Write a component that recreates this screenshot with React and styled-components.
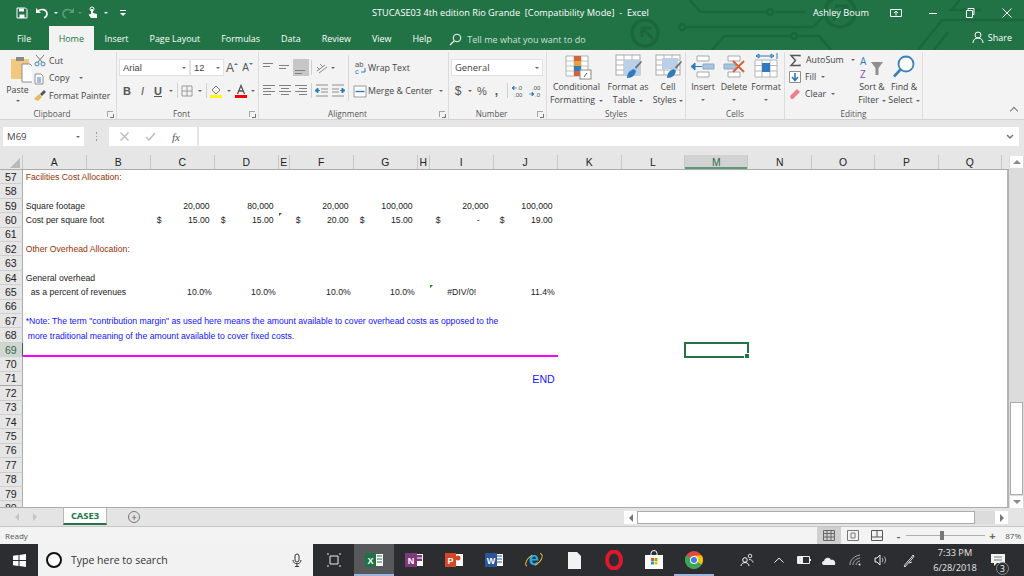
import React from 'react';
import styled, { createGlobalStyle, css } from 'styled-components';

const UI = '"Open Sans", "Noto Sans", sans-serif';
const CELL = '"Liberation Sans", Arial, sans-serif';
const GREEN = '#217346';

const GlobalStyle = createGlobalStyle`
	html, body { margin: 0; padding: 0; background: #e6e6e6; }
	* { box-sizing: border-box; }
`;

const Page = styled.div`
	width: 1024px;
	height: 576px;
	overflow: hidden;
	display: flex;
	flex-direction: column;
	font-family: ${UI};
	color: #444;
`;

// Title bar and tabs
const Header = styled.header`
	position: relative;
	height: 50px;
	flex: none;
	background: ${GREEN};
	color: #fff;
`;

const Circuit = styled.svg`
	position: absolute;
	right: 0;
	top: 0;
`;

const TitleBar = styled.div`
	position: relative;
	height: 25px;
	display: flex;
	align-items: center;
`;

const Qat = styled.div`
	display: flex;
	align-items: center;
	width: 372px;
	padding-left: 14px;
	flex: none;
`;

const QatBtn = styled.span`
	display: flex;
	align-items: center;
	justify-content: center;
	width: ${p => p.$w}px;
	height: 20px;
	flex: none;
`;

const Title = styled.div`
	flex: none;
	width: 441px;
	font-size: 9.2px;
	white-space: pre;
`;

const UserName = styled.div`
	flex: none;
	width: 64px;
	font-size: 9.2px;
	white-space: nowrap;
`;

const WinBtn = styled.span`
	display: flex;
	align-items: center;
	justify-content: center;
	width: 37px;
	height: 25px;
	flex: none;
`;

const TabRow = styled.nav`
	position: relative;
	height: 25px;
	display: flex;
	padding-left: 6.5px;
	align-items: stretch;
`;

const Tab = styled.div`
	display: flex;
	align-items: center;
	padding: 0 ${p => (p.$active ? 10 : 10.5)}px;
	font-size: 8.95px;
	margin-top: 1px;
	${p => p.$active && css`
		background: #f3f3f3;
		color: ${GREEN};
		margin-left: 7px;
	`}
`;

const TellMe = styled.div`
	display: flex;
	align-items: center;
	gap: 5px;
	margin-left: 7px;
	font-size: 9px;
	color: #cfe0d5;
	padding-top: 3px;
`;

const Share = styled.div`
	position: absolute;
	right: 12px;
	top: 0;
	height: 25px;
	display: flex;
	align-items: center;
	gap: 4px;
	font-size: 9px;
`;

// Ribbon
const Ribbon = styled.section`
	position: relative;
	height: 70px;
	flex: none;
	display: flex;
	background: #f3f3f3;
	padding-top: 2px;
	border-bottom: 1px solid #d4d4d4;
	font-size: 8.8px;
`;

const Group = styled.div`
	position: relative;
	width: ${p => p.$w}px;
	height: 67px;
	flex: none;
	display: flex;
	flex-direction: column;
	border-right: 1px solid #dcdcdc;
`;

const GroupBody = styled.div`
	flex: 1;
	display: flex;
	padding-left: ${p => p.$pad || 0}px;
	min-height: 0;
`;

const GroupLabel = styled.div`
	height: 11px;
	line-height: 11px;
	text-align: center;
	font-size: 8.2px;
	color: #555;
	flex: none;
	padding-right: ${p => (p.$launcher ? 12 : 0)}px;
`;

const Launcher = styled.span`
	position: absolute;
	right: 3px;
	bottom: 2px;
	width: 6px;
	height: 6px;
	border-left: 1px solid #a5a5a5;
	border-top: 1px solid #a5a5a5;
	&::after {
		content: '';
		position: absolute;
		left: 2px;
		top: 2px;
		width: 3px;
		height: 3px;
		border-right: 1px solid #777;
		border-bottom: 1px solid #777;
	}
`;

const Caret = styled.i`
	display: inline-block;
	flex: none;
	width: 0;
	height: 0;
	margin-left: ${p => p.$gap || 0}px;
	vertical-align: middle;
	border-left: 2.5px solid transparent;
	border-right: 2.5px solid transparent;
	border-top: 2.5px solid #666;
`;

const PasteBtn = styled.div`
	width: 33px;
	flex: none;
	display: flex;
	flex-direction: column;
	align-items: center;
	padding-top: 2px;
	line-height: 12px;
`;

const SmallStack = styled.div`
	display: flex;
	flex-direction: column;
	padding-top: ${p => p.$top ?? 0}px;
`;

const SmallBtn = styled.div`
	display: flex;
	align-items: center;
	gap: ${p => p.$gap ?? 3}px;
	height: 17.5px;
	white-space: nowrap;
`;

const Rows = styled.div`
	display: flex;
	flex-direction: column;
	gap: 6px;
	padding-top: 7px;
	width: ${p => (p.$w ? p.$w + 'px' : 'auto')};
	flex: none;
`;

const Row = styled.div`
	display: flex;
	align-items: center;
	height: 17px;
`;

const Combo = styled.div`
	width: ${p => p.$w}px;
	height: 17px;
	flex: none;
	display: flex;
	align-items: center;
	justify-content: space-between;
	padding: 0 3px;
	background: #fff;
	border: 1px solid #e2e2e2;
	font-size: 9.4px;
	color: #444;
	font-family: ${p => (p.$cell ? CELL : UI)};
`;

const IconBtn = styled.span`
	display: flex;
	align-items: center;
	justify-content: center;
	width: ${p => p.$w || 16}px;
	height: 17px;
	flex: none;
	background: ${p => (p.$on ? '#c6c6c6' : 'transparent')};
`;

const RowSep = styled.span`
	width: 1px;
	height: 15px;
	margin: 0 ${p => p.$m ?? 2}px;
	flex: none;
	background: #d0d0d0;
`;

const VSep = styled.span`
	width: 1px;
	height: 46px;
	margin: 3px 4px 0 1px;
	flex: none;
	background: #d8d8d8;
`;

const BigBtn = styled.div`
	width: ${p => p.$w}px;
	flex: none;
	display: flex;
	flex-direction: column;
	align-items: center;
	text-align: center;
	white-space: nowrap;
	line-height: 13px;
	padding-top: 1px;
`;

const BigIcon = styled.div`
	height: 28px;
	display: flex;
	align-items: center;
	justify-content: center;
	flex: none;
`;

const FontLetter = styled.span`
	font-family: ${CELL};
	font-size: ${p => p.$size || 11}px;
	font-weight: ${p => (p.$bold ? 700 : 400)};
	font-style: ${p => (p.$italic ? 'italic' : 'normal')};
	text-decoration: ${p => (p.$under ? 'underline' : 'none')};
	color: #555;
`;

const Collapse = styled.span`
	position: absolute;
	right: 7px;
	bottom: 5px;
	width: 6px;
	height: 6px;
	border-left: 1.5px solid #777;
	border-top: 1.5px solid #777;
	transform: rotate(45deg);
`;

// Formula bar
const FormulaArea = styled.div`
	height: 35px;
	flex: none;
	padding: 7px 5px 0 3px;
	display: flex;
	background: #e6e6e6;
`;

const NameBox = styled.div`
	width: 81px;
	height: 19px;
	flex: none;
	padding: 0 4px 0 4px;
	display: flex;
	align-items: center;
	justify-content: space-between;
	background: #fff;
	font-size: 9.6px;
`;

const Grip = styled.div`
	width: 25px;
	flex: none;
	display: flex;
	flex-direction: column;
	align-items: center;
	justify-content: center;
	gap: 2px;
	height: 19px;
	& > i {
		width: 1.5px;
		height: 1.5px;
		background: #9a9a9a;
	}
`;

const FxBox = styled.div`
	width: 88px;
	height: 19px;
	flex: none;
	display: flex;
	align-items: center;
	background: #fff;
	padding-left: 10px;
	gap: 15px;
	color: #b9b9b9;
`;

const FxText = styled.span`
	font-family: "Liberation Serif", serif;
	font-style: italic;
	font-size: 11px;
	color: #555;
	margin-left: 1px;
`;

const FormulaInput = styled.div`
	flex: 1;
	height: 19px;
	margin-left: 2px;
	background: #fff;
	display: flex;
	align-items: center;
	justify-content: flex-end;
	padding-right: 4px;
`;

// Sheet
const COLS = '22.7px repeat(4, 64px) 11px 64px 64px 12px repeat(3, 64px) repeat(7, 63.4px) 1fr';
const COL_NAMES = ['A', 'B', 'C', 'D', 'E', 'F', 'G', 'H', 'I', 'J', 'K', 'L', 'M', 'N', 'O', 'P', 'Q'];
const ROW_H = 14.41;

const SheetArea = styled.div`
	height: 353px;
	flex: none;
	display: flex;
	background: #e6e6e6;
`;

const GridPane = styled.div`
	width: 1009px;
	flex: none;
	display: flex;
	flex-direction: column;
	overflow: hidden;
`;

const HeadRow = styled.div`
	height: 15px;
	flex: none;
	display: grid;
	grid-template-columns: ${COLS};
	border-bottom: 1px solid #ababab;
	font-family: ${CELL};
	font-size: 10.4px;
	color: #222;
`;

const Corner = styled.div`
	position: relative;
	border-right: 1px solid #c8c8c8;
	&::after {
		content: '';
		position: absolute;
		right: 2px;
		bottom: 1px;
		border-left: 10px solid transparent;
		border-bottom: 10px solid #b9b9b9;
	}
`;

const ColHead = styled.div`
	display: flex;
	align-items: center;
	justify-content: center;
	border-right: 1px solid #c8c8c8;
	${p => p.$on && css`
		background: #d2d2d2;
		color: #2f6b47;
		box-shadow: inset 0 -2px 0 #5f9a78;
	`}
`;

const SheetBody = styled.div`
	flex: 1;
	min-height: 0;
	overflow: hidden;
	background: #fff;
	border-right: 2px solid #b4b4b4;
	border-bottom: 1px solid #ababab;
	font-family: ${CELL};
`;

const SheetRow = styled.div`
	height: ${ROW_H}px;
	display: grid;
	grid-template-columns: ${COLS};
	grid-template-rows: ${ROW_H}px;
	color: #222;
`;

const RowHead = styled.div`
	grid-column: 1;
	grid-row: 1;
	display: flex;
	align-items: center;
	justify-content: center;
	font-size: 10.6px;
	background: ${p => (p.$on ? '#d0d6d1' : '#e6e6e6')};
	color: ${p => (p.$on ? '#2f6b47' : '#222')};
	border-bottom: 1px solid ${p => (p.$dark ? '#a9a9a9' : '#cfcfcf')};
	border-right: 1px solid ${p => (p.$on ? GREEN : '#ababab')};
`;

const TONES = { black: '#222', brown: '#993300', blue: '#1414ff' };

const Cell = styled.div`
	position: relative;
	grid-row: 1;
	grid-column: ${p => COL_NAMES.indexOf(p.$col) + 2};
	display: flex;
	align-items: center;
	white-space: nowrap;
	min-width: 0;
	color: ${p => TONES[p.$tone || 'black']};
	font-size: ${p => p.$size || 8.68}px;
	padding: 0 ${p => p.$right ?? 0}px 0 ${p => p.$left ?? 0}px;
	justify-content: ${p => p.$align || 'flex-start'};
	${p => p.$flag && css`
		&::before {
			content: '';
			position: absolute;
			left: 0;
			top: 0;
			border-top: 3px solid #107c10;
			border-right: 3px solid transparent;
		}
	`}
`;

const PinkRule = styled.div`
	grid-row: 1;
	grid-column: 2 / span 10;
	align-self: end;
	height: 2px;
	background: #ff00ff;
`;

const ActiveCell = styled.div`
	position: relative;
	grid-row: 1;
	grid-column: 14;
	outline: 2px solid ${GREEN};
	outline-offset: -1px;
	&::after {
		content: '';
		position: absolute;
		right: -2px;
		bottom: -2px;
		width: 4px;
		height: 4px;
		background: ${GREEN};
		border: 0.5px solid #fff;
	}
`;

const VScroll = styled.div`
	flex: 1;
	display: flex;
	flex-direction: column;
	padding: 1px 1px 0 1px;
	background: linear-gradient(#e6e6e6 0, #e6e6e6 1px, #dcdcdc 1px);
`;

const ScrollBtn = styled.div`
	height: 12px;
	flex: none;
	display: flex;
	align-items: center;
	justify-content: center;
	background: #fff;
`;

const Tri = styled.i`
	width: 0;
	height: 0;
	${p => p.$dir === 'up' && css`
		border-left: 4px solid transparent;
		border-right: 4px solid transparent;
		border-bottom: 4px solid #8a8a8a;
	`}
	${p => p.$dir === 'down' && css`
		border-left: 4px solid transparent;
		border-right: 4px solid transparent;
		border-top: 4px solid #8a8a8a;
	`}
	${p => p.$dir === 'left' && css`
		border-top: 4px solid transparent;
		border-bottom: 4px solid transparent;
		border-right: 4px solid ${p.$light ? '#c4c4c4' : '#777'};
	`}
	${p => p.$dir === 'right' && css`
		border-top: 4px solid transparent;
		border-bottom: 4px solid transparent;
		border-left: 4px solid ${p.$light ? '#c4c4c4' : '#777'};
	`}
`;

const VThumb = styled.div`
	height: 93px;
	flex: none;
	margin-top: 234px;
	background: #fff;
	border: 1px solid #ababab;
`;

// Sheet tabs and status bar
const TabsBar = styled.div`
	height: 19px;
	flex: none;
	display: flex;
	align-items: flex-start;
	background: #e4e4e4;
	border-bottom: 1px solid #c6c6c6;
`;

const TabNav = styled.div`
	width: 63px;
	height: 18px;
	flex: none;
	display: flex;
	align-items: center;
	gap: 14px;
	padding-left: 15px;
`;

const SheetTab = styled.div`
	width: 44px;
	height: 17px;
	flex: none;
	display: flex;
	align-items: center;
	justify-content: center;
	background: #fff;
	border-bottom: 2px solid ${GREEN};
	border-left: 1px solid #b8b8b8;
	border-right: 1px solid #b8b8b8;
	color: ${GREEN};
	font-size: 9.4px;
	font-weight: 700;
`;

const AddSheet = styled.div`
	width: 12px;
	height: 12px;
	margin: 3px 0 0 21px;
	flex: none;
	border-radius: 50%;
	border: 1px solid #777;
	display: flex;
	align-items: center;
	justify-content: center;
	font-size: 10px;
	line-height: 1;
	color: #555;
`;

const HScroll = styled.div`
	margin-left: auto;
	margin-right: 16px;
	width: 384px;
	height: 13px;
	margin-top: 3px;
	display: flex;
	flex: none;
	background: #dcdcdc;
`;

const HBtn = styled.div`
	width: 13px;
	flex: none;
	display: flex;
	align-items: center;
	justify-content: center;
	background: #fff;
`;

const HThumb = styled.div`
	width: 338px;
	flex: none;
	background: #fff;
	border: 1px solid #ababab;
`;

const StatusBar = styled.footer`
	height: 17px;
	flex: none;
	display: flex;
	align-items: center;
	background: #f3f3f3;
	padding-left: 5px;
	font-size: 8px;
	color: #555;
`;

const ViewBtn = styled.span`
	width: 24px;
	height: 17px;
	flex: none;
	display: flex;
	align-items: center;
	justify-content: center;
	background: ${p => (p.$on ? '#d0d0d0' : 'transparent')};
`;

const ZoomSlider = styled.div`
	position: relative;
	width: 79px;
	height: 1px;
	margin: 0 3px;
	flex: none;
	background: #b0b0b0;
	&::after {
		content: '';
		position: absolute;
		left: 34px;
		top: -4px;
		width: 4px;
		height: 9px;
		background: #777;
	}
`;

const ZoomSign = styled.span`
	font-size: 11px;
	font-weight: 700;
	color: #666;
	width: 9px;
	text-align: center;
	line-height: 1;
`;

const ZoomPct = styled.span`
	width: 27px;
	text-align: right;
	padding-right: 3px;
`;

// Taskbar
const Taskbar = styled.div`
	height: 32px;
	flex: none;
	display: flex;
	align-items: stretch;
	background: #2c2d30;
	color: #fff;
`;

const StartBtn = styled.div`
	width: 38px;
	flex: none;
	display: flex;
	align-items: center;
	justify-content: center;
`;

const SearchBox = styled.div`
	width: 275px;
	flex: none;
	display: flex;
	align-items: center;
	background: #f2f2f2;
	color: #333;
	font-size: 10.5px;
	padding-left: 7px;
	gap: 8px;
`;

const SearchText = styled.span`
	flex: 1;
`;

const MicSlot = styled.span`
	width: 32px;
	display: flex;
	justify-content: center;
`;

const TaskBtn = styled.div`
	width: ${p => p.$w || 40}px;
	flex: none;
	display: flex;
	align-items: center;
	justify-content: center;
	background: ${p => (p.$active ? '#57585a' : 'transparent')};
	box-shadow: ${p => (p.$running ? 'inset 0 -2px 0 #9db4de' : 'none')};
`;

const Tray = styled.div`
	margin-left: auto;
	display: flex;
	padding-right: 14px;
`;

const TrayItem = styled.div`
	width: ${p => p.$w}px;
	flex: none;
	display: flex;
	align-items: center;
	justify-content: center;
`;

const Clock = styled.div`
	width: 62px;
	flex: none;
	display: flex;
	flex-direction: column;
	align-items: center;
	justify-content: center;
	gap: 3px;
	font-size: 9.2px;
	line-height: 12px;
	color: #e8e8e8;
`;

const Notify = styled.div`
	position: relative;
	width: 24px;
	flex: none;
	display: flex;
	align-items: center;
	justify-content: center;
`;

const NotifyCount = styled.span`
	position: absolute;
	right: 1px;
	bottom: 1px;
	width: 13px;
	height: 13px;
	border-radius: 50%;
	border: 1px solid #8a8a8a;
	background: #2c2d30;
	font-size: 8.5px;
	line-height: 11px;
	text-align: center;
`;

// Drawn icons
const Ic = ({ w = 16, h = 16, children }) => (
	<svg width={w} height={h} viewBox={`0 0 ${w} ${h}`} fill="none">{children}</svg>
);

const CircuitArt = () => (
	<Circuit width="420" height="50" viewBox="604 0 420 50" fill="none" stroke="#1b673c" strokeWidth="2.4">
		<circle cx="645" cy="33" r="13" strokeWidth="3.5" />
		<path d="M642 37v-9h9M642 28l11 11" strokeWidth="3" />
		<circle cx="682" cy="27" r="3" />
		<path d="M685 27h128l13-13" />
		<circle cx="770" cy="12" r="3" />
		<path d="M767 12H700L690 0M775 12h30" />
		<path d="M712 50l12-14h66" />
		<circle cx="794" cy="36" r="3" />
		<path d="M797 36h22l12 14" />
		<circle cx="840" cy="12" r="15" strokeWidth="3.5" />
		<path d="M835 6h12v12M847 6l-14 14" strokeWidth="3" />
		<path d="M918 50l24-30h82M934 50l14-18M960 0l-9 10h30" />
	</Circuit>
);

const AlignLines = ({ widths, top = 3, step = 3, anchor = 'left' }) => (
	<Ic>
		{widths.map((w, i) => {
			const x = anchor === 'center' ? 8 - w / 2 : anchor === 'right' ? 14 - w : 2;
			return <rect key={i} x={x} y={top + i * step} width={w} height="1" fill="#808080" />;
		})}
	</Ic>
);

const BigTable = ({ fill, children }) => (
	<Ic w={30} h={28}>
		<rect x="3" y="2" width="24" height="20" fill="#fff" stroke="#a9a9a9" />
		<path d="M3 7h24M3 12h24M3 17h24M11 2v20M19 2v20" stroke="#b5b5b5" />
		{fill}
		{children}
	</Ic>
);

const Brush = () => (
	<g>
		<path d="M22 14l6-6 1 1-6 7z" fill="#6e6e6e" />
		<path d="M14 25c0-5 3-8 7-9l2 2c-1 4-3 7-9 7z" fill="#2f7bbf" />
	</g>
);

const CellStack = ({ children }) => (
	<Ic w={30} h={28}>
		<path d="M9 3h12v5H9zM9 19h12v5H9z" fill="#fff" stroke="#a9a9a9" />
		{children}
	</Ic>
);

const Sum = () => (
	<Ic w={13} h={13}><path d="M11 2.5V1.5H2l4.5 5-4.5 5h9v-1" stroke="#555" strokeWidth="1.4" /></Ic>
);

const App = () => {
	const rows = [];
	for (let n = 57; n <= 80; n++) rows.push(n);

	const content = {
		57: [{ col: 'A', left: 3, tone: 'brown', text: 'Facilities Cost Allocation:' }],
		59: [
			{ col: 'A', left: 3, text: 'Square footage' },
			{ col: 'C', right: 5, align: 'flex-end', text: '20,000' },
			{ col: 'D', right: 5, align: 'flex-end', text: '80,000' },
			{ col: 'F', right: 5, align: 'flex-end', text: '20,000' },
			{ col: 'G', right: 5, align: 'flex-end', text: '100,000' },
			{ col: 'I', right: 5, align: 'flex-end', text: '20,000' },
			{ col: 'J', right: 5, align: 'flex-end', text: '100,000' }
		],
		60: [
			{ col: 'A', left: 3, text: 'Cost per square foot' },
			{ col: 'C', money: '15.00' },
			{ col: 'D', money: '15.00' },
			{ col: 'E', flag: true },
			{ col: 'F', money: '20.00' },
			{ col: 'G', money: '15.00' },
			{ col: 'I', money: '-', dash: true },
			{ col: 'J', money: '19.00' }
		],
		62: [{ col: 'A', left: 3, tone: 'brown', text: 'Other Overhead Allocation:' }],
		64: [{ col: 'A', left: 3, text: 'General overhead' }],
		65: [
			{ col: 'A', left: 8, text: 'as a percent of revenues' },
			{ col: 'C', right: 3, align: 'flex-end', text: '10.0%' },
			{ col: 'D', right: 3, align: 'flex-end', text: '10.0%' },
			{ col: 'F', right: 3, align: 'flex-end', text: '10.0%' },
			{ col: 'G', right: 3, align: 'flex-end', text: '10.0%' },
			{ col: 'I', align: 'center', flag: true, text: '#DIV/0!' },
			{ col: 'J', right: 3, align: 'flex-end', text: '11.4%' }
		],
		67: [{ col: 'A', left: 3, tone: 'blue', text: '*Note: The term "contribution margin" as used here means the amount available to cover overhead costs as opposed to the' }],
		68: [{ col: 'A', left: 5, tone: 'blue', text: 'more traditional meaning of the amount available to cover fixed costs.' }],
		71: [{ col: 'J', right: 3, align: 'flex-end', tone: 'blue', size: 10.6, text: 'END' }]
	};

	const renderCell = (c, i) => {
		if (c.money) {
			return (
				<Cell key={i} $col={c.col} $left={6} $right={c.dash ? 14 : 5} $align="space-between">
					<span>$</span><span>{c.money}</span>
				</Cell>
			);
		}
		return (
			<Cell key={i} $col={c.col} $left={c.left} $right={c.right} $align={c.align} $tone={c.tone} $size={c.size} $flag={c.flag}>
				{c.text}
			</Cell>
		);
	};

	return (
		<Page>
			<GlobalStyle />
			<Header>
				<CircuitArt />
				<TitleBar>
					<Qat>
						<QatBtn $w={16}>
							<Ic w={12} h={12}>
								<path d="M1 1h8.5L11 2.5V11H1z" stroke="#fff" />
								<path d="M3 1.5h5v3H3zM3.5 7.5h5V11h-5z" fill="#fff" />
							</Ic>
						</QatBtn>
						<QatBtn $w={23}>
							<Ic w={14} h={12}>
								<path d="M2 5c3-4 10-3 10 2 0 2-1 3-3 4" stroke="#fff" strokeWidth="1.6" />
								<path d="M1 1v5h5z" fill="#fff" />
							</Ic>
						</QatBtn>
						<QatBtn $w={6}><Caret style={{ borderTopColor: '#fff' }} /></QatBtn>
						<QatBtn $w={18}>
							<Ic w={14} h={12}>
								<path d="M12 5C9 1 2 2 2 7c0 2 1 3 3 4" stroke="#5c9a78" strokeWidth="1.6" />
								<path d="M13 1v5H8z" fill="#5c9a78" />
							</Ic>
						</QatBtn>
						<QatBtn $w={6}><Caret style={{ borderTopColor: '#5c9a78' }} /></QatBtn>
						<QatBtn $w={20}>
							<Ic w={12} h={13}>
								<circle cx="5" cy="3" r="2" stroke="#fff" />
								<path d="M4 3h2v4l4 1v4H4L1.5 8.5 4 8z" fill="#fff" />
							</Ic>
						</QatBtn>
						<QatBtn $w={6}><Caret style={{ borderTopColor: '#fff' }} /></QatBtn>
						<QatBtn $w={28}>
							<Ic w={8} h={8}>
								<path d="M1 1.5h6" stroke="#fff" />
								<path d="M1 4h6L4 7z" fill="#fff" />
							</Ic>
						</QatBtn>
					</Qat>
					<Title>{'STUCASE03 4th edition Rio Grande  [Compatibility Mode]  -  Excel'}</Title>
					<UserName>Ashley Boum</UserName>
					<WinBtn>
						<Ic w={12} h={10}>
							<path d="M.5 1.5h11v7H.5z" stroke="#fff" />
							<path d="M6 7.5V3.5M4 5l2-2 2 2" stroke="#fff" />
						</Ic>
					</WinBtn>
					<WinBtn><Ic w={10} h={10}><path d="M1 5.5h8" stroke="#fff" /></Ic></WinBtn>
					<WinBtn>
						<Ic w={10} h={10}><path d="M1.5 2.5h6v7h-6zM3 2.5V.5h6v6H7.5" stroke="#fff" /></Ic>
					</WinBtn>
					<WinBtn><Ic w={12} h={12}><path d="M1.5 1.5l9 9M10.5 1.5l-9 9" stroke="#fff" /></Ic></WinBtn>
				</TitleBar>
				<TabRow>
					<Tab>File</Tab>
					<Tab $active>Home</Tab>
					<Tab>Insert</Tab>
					<Tab>Page Layout</Tab>
					<Tab>Formulas</Tab>
					<Tab>Data</Tab>
					<Tab>Review</Tab>
					<Tab>View</Tab>
					<Tab>Help</Tab>
					<TellMe>
						<Ic w={13} h={13}>
							<circle cx="8" cy="5" r="3.8" stroke="#fff" />
							<path d="M5 8l-4 4" stroke="#fff" strokeWidth="1.2" />
						</Ic>
						Tell me what you want to do
					</TellMe>
					<Share>
						<Ic w={12} h={13}>
							<circle cx="6" cy="4" r="3" stroke="#fff" />
							<path d="M1 12c0-3 2-5 5-5s5 2 5 5" stroke="#fff" />
						</Ic>
						Share
					</Share>
				</TabRow>
			</Header>

			<Ribbon>
				<Group $w={117}>
					<GroupBody $pad={1}>
						<PasteBtn>
							<Ic w={28} h={30}>
								<path d="M7 5h18v20H7z" fill="#f0c97f" />
								<path d="M12 3h8v4h-8z" fill="#8a8a8a" />
								<path d="M18 11h8l4 4v14H18z" transform="translate(0 -1)" fill="#fff" stroke="#8d8d8d" />
							</Ic>
							Paste
							<Caret style={{ marginTop: 4 }} />
						</PasteBtn>
						<SmallStack>
							<SmallBtn>
								<Ic w={12} h={13}>
									<circle cx="3" cy="10" r="2" stroke="#3d7fbd" />
									<circle cx="9" cy="10" r="2" stroke="#3d7fbd" />
									<path d="M4 8l6-7M8 8L2 1" stroke="#777" />
								</Ic>
								Cut
							</SmallBtn>
							<SmallBtn>
								<Ic w={12} h={13}>
									<path d="M1 2h6l2 2v8H1z" fill="#fff" stroke="#8f8f8f" />
									<path d="M3 6h4M3 8h4M3 10h4" stroke="#3d7fbd" />
								</Ic>
								Copy
								<Caret $gap={6} />
							</SmallBtn>
							<SmallBtn>
								<Ic w={12} h={13}>
									<path d="M5 5l3 3-4 4-4-2z" fill="#e8b95e" />
									<path d="M6 5l4-4 2 2-4 4z" fill="#555" />
								</Ic>
								Format Painter
							</SmallBtn>
						</SmallStack>
					</GroupBody>
					<GroupLabel $launcher>Clipboard</GroupLabel>
					<Launcher />
				</Group>

				<Group $w={142}>
					<GroupBody $pad={2}>
						<Rows>
							<Row>
								<Combo $w={71} $cell>Arial<Caret /></Combo>
								<Combo $w={34} $cell>12<Caret /></Combo>
								<IconBtn $w={16}><FontLetter $size={12}>A</FontLetter><Caret style={{ transform: 'rotate(180deg)', borderTopColor: '#2f7bbf', marginBottom: 7 }} /></IconBtn>
								<IconBtn $w={15}><FontLetter $size={10}>A</FontLetter><Caret style={{ borderTopColor: '#2f7bbf', marginBottom: 7 }} /></IconBtn>
							</Row>
							<Row>
								<IconBtn><FontLetter $bold>B</FontLetter></IconBtn>
								<IconBtn $w={15}><FontLetter $italic>I</FontLetter></IconBtn>
								<IconBtn><FontLetter $under $bold>U</FontLetter></IconBtn>
								<IconBtn $w={10}><Caret /></IconBtn>
								<RowSep $m={1} />
								<IconBtn>
									<Ic w={12} h={12}><path d="M1 1h10v10H1zM6 1v10M1 6h10" stroke="#9a9a9a" /></Ic>
								</IconBtn>
								<IconBtn $w={10}><Caret /></IconBtn>
								<RowSep $m={1} />
								<IconBtn>
									<Ic w={14} h={14}>
										<path d="M3 6l4-4 4 4-4 4z" fill="#fff" stroke="#777" />
										<rect x="1" y="11" width="12" height="3" fill="#ffff00" />
									</Ic>
								</IconBtn>
								<IconBtn $w={9}><Caret /></IconBtn>
								<IconBtn $w={15}>
									<Ic w={14} h={14}>
										<path d="M3.5 10L7 1.5 10.5 10M5 7h4" stroke="#555" strokeWidth="1.3" />
										<rect x="1" y="11" width="12" height="3" fill="#ff0000" />
									</Ic>
								</IconBtn>
								<IconBtn $w={9}><Caret /></IconBtn>
							</Row>
						</Rows>
					</GroupBody>
					<GroupLabel $launcher>Font</GroupLabel>
					<Launcher />
				</Group>

				<Group $w={190}>
					<GroupBody $pad={2}>
						<Rows $w={86}>
							<Row>
								<IconBtn><AlignLines widths={[10, 7]} top={3} /></IconBtn>
								<IconBtn><AlignLines widths={[10, 7]} top={5} /></IconBtn>
								<IconBtn $on><AlignLines widths={[10, 7]} top={10} /></IconBtn>
								<RowSep />
								<IconBtn $w={15}>
									<Ic w={14} h={14}>
										<path d="M2 10l8-6M4 12l8-6M5 3l3 3M2 6l3 3" stroke="#8a8a8a" />
									</Ic>
								</IconBtn>
								<IconBtn $w={8}><Caret /></IconBtn>
							</Row>
							<Row>
								<IconBtn><AlignLines widths={[12, 8, 12, 8]} top={2} /></IconBtn>
								<IconBtn><AlignLines widths={[12, 8, 12, 8]} top={2} anchor="center" /></IconBtn>
								<IconBtn><AlignLines widths={[12, 8, 12, 8]} top={2} anchor="right" /></IconBtn>
								<RowSep />
								<IconBtn>
									<Ic>
										<path d="M2 2h12M7 6h7M7 9h7M2 13h12" stroke="#8f8f8f" />
										<path d="M1 7.5h5M1 7.5l3-2.5v5z" fill="#2f7bbf" stroke="#2f7bbf" />
									</Ic>
								</IconBtn>
								<IconBtn>
									<Ic>
										<path d="M2 2h12M2 6h7M2 9h7M2 13h12" stroke="#8f8f8f" />
										<path d="M15 7.5h-5M15 7.5l-3-2.5v5z" fill="#2f7bbf" stroke="#2f7bbf" />
									</Ic>
								</IconBtn>
							</Row>
						</Rows>
						<VSep />
						<Rows>
							<Row>
								<IconBtn $w={14}>
									<svg width="13" height="15" viewBox="0 0 13 15">
										<text x="1" y="6.5" fontSize="7.5" fill="#555" fontFamily={CELL}>ab</text>
										<text x="1" y="14" fontSize="7.5" fill="#2f7bbf" fontFamily={CELL}>c</text>
										<path d="M11 8v4H7" stroke="#2f7bbf" fill="none" />
									</svg>
								</IconBtn>
								<span style={{ marginLeft: 1 }}>Wrap Text</span>
							</Row>
							<Row>
								<IconBtn $w={14}>
									<Ic w={14} h={14}>
										<path d="M1 2h12v11H1z" fill="#fff" stroke="#9a9a9a" />
										<path d="M2.5 7.5h9" stroke="#2f7bbf" strokeWidth="1.4" />
									</Ic>
								</IconBtn>
								<span style={{ marginLeft: 1 }}>Merge &amp; Center</span>
								<Caret $gap={6} />
							</Row>
						</Rows>
					</GroupBody>
					<GroupLabel $launcher>Alignment</GroupLabel>
					<Launcher />
				</Group>

				<Group $w={98}>
					<GroupBody $pad={2}>
						<Rows>
							<Row><Combo $w={92}>General<Caret /></Combo></Row>
							<Row>
								<IconBtn $w={14}><FontLetter $size={12}>$</FontLetter></IconBtn>
								<IconBtn $w={10}><Caret /></IconBtn>
								<IconBtn $w={14}><FontLetter $size={11}>%</FontLetter></IconBtn>
								<IconBtn $w={15}><FontLetter $bold $size={12}>,</FontLetter></IconBtn>
								<RowSep $m={3} />
								<IconBtn $w={17}>
									<svg width="16" height="14" viewBox="0 0 16 14">
										<text x="5" y="6" fontSize="6" fill="#555" fontFamily={CELL}>.0</text>
										<text x="2" y="13" fontSize="6" fill="#555" fontFamily={CELL}>.00</text>
										<path d="M0 4h5M0 4l2-2v4z" stroke="#2f7bbf" fill="#2f7bbf" strokeWidth=".7" />
									</svg>
								</IconBtn>
								<IconBtn $w={16}>
									<svg width="16" height="14" viewBox="0 0 16 14">
										<text x="4" y="6" fontSize="6" fill="#555" fontFamily={CELL}>.00</text>
										<text x="7" y="13" fontSize="6" fill="#555" fontFamily={CELL}>.0</text>
										<path d="M1 10h5M6 10l-2-2v4z" stroke="#2f7bbf" fill="#2f7bbf" strokeWidth=".7" />
									</svg>
								</IconBtn>
							</Row>
						</Rows>
					</GroupBody>
					<GroupLabel $launcher>Number</GroupLabel>
					<Launcher />
				</Group>

				<Group $w={139}>
					<GroupBody $pad={2}>
						<BigBtn $w={55}>
							<BigIcon>
								<Ic w={30} h={28}>
									<path d="M4 3h22v20H4z" fill="#fff" stroke="#b0b0b0" />
									<path d="M4 8h22M4 13h22M4 18h22M12 3v20M19 3v20" stroke="#c0c0c0" />
									<rect x="12" y="3" width="7" height="5" fill="#d9603b" />
									<rect x="12" y="8" width="7" height="5" fill="#e8a33c" />
									<rect x="12" y="13" width="7" height="5" fill="#2f7bbf" />
									<rect x="12" y="18" width="7" height="5" fill="#d9603b" />
									<rect x="18" y="17" width="11" height="9" fill="#fff" stroke="#8a8a8a" />
									<path d="M22 24l3-4" stroke="#555" />
								</Ic>
							</BigIcon>
							Conditional
							<div>Formatting<Caret $gap={4} /></div>
						</BigBtn>
						<BigBtn $w={48}>
							<BigIcon>
								<BigTable fill={<rect x="11" y="7" width="16" height="15" fill="#b9d0e8" />}>
									<Brush />
								</BigTable>
							</BigIcon>
							Format as
							<div>Table<Caret $gap={4} /></div>
						</BigBtn>
						<BigBtn $w={32}>
							<BigIcon>
								<BigTable fill={<rect x="9" y="5" width="16" height="11" fill="#b9d0e8" />}>
									<Brush />
								</BigTable>
							</BigIcon>
							Cell
							<div>Styles<Caret $gap={3} /></div>
						</BigBtn>
					</GroupBody>
					<GroupLabel>Styles</GroupLabel>
				</Group>

				<Group $w={99}>
					<GroupBody $pad={3}>
						<BigBtn $w={28}>
							<BigIcon>
								<CellStack>
									<path d="M15 11h11v5H15z" fill="#a9c4df" stroke="#8aa9c8" />
									<path d="M3 13.5h11M3 13.5l4-3.5v7z" stroke="#2f7bbf" fill="#2f7bbf" />
								</CellStack>
							</BigIcon>
							Insert
							<Caret style={{ marginTop: 5 }} />
						</BigBtn>
						<BigBtn $w={34}>
							<BigIcon>
								<CellStack>
									<path d="M5 11h12v5H5z" fill="#a9c4df" stroke="#8aa9c8" />
									<path d="M14 8l11 11M25 8L14 19" stroke="#d9603b" strokeWidth="2" />
								</CellStack>
							</BigIcon>
							Delete
							<Caret style={{ marginTop: 5 }} />
						</BigBtn>
						<BigBtn $w={30}>
							<BigIcon>
								<Ic w={30} h={28}>
									<path d="M4 7h22v17H4zM4 12.5h22M4 18h22M11 7v17M19 7v17" stroke="#b5b5b5" fill="#fff" />
									<rect x="11" y="10" width="8" height="9" fill="#2f7bbf" />
									<path d="M5 3h18M5 3l3-2v4zM23 3l-3-2v4zM26 0v6" stroke="#2f7bbf" />
								</Ic>
							</BigIcon>
							Format
							<Caret style={{ marginTop: 5 }} />
						</BigBtn>
					</GroupBody>
					<GroupLabel>Cells</GroupLabel>
				</Group>

				<Group $w={138}>
					<GroupBody $pad={4}>
						<SmallStack $top={0} style={{ width: 68 }}>
							<SmallBtn $gap={4} style={{ height: 16 }}>
								<Sum />AutoSum<Caret $gap={3} />
							</SmallBtn>
							<SmallBtn $gap={4} style={{ height: 17 }}>
								<Ic w={12} h={12}>
									<path d="M.5.5h11v11H.5z" fill="#fff" stroke="#8f8f8f" />
									<path d="M6 2v7M3 6l3 3.5L9 6" stroke="#2f7bbf" strokeWidth="1.6" />
								</Ic>
								Fill<Caret $gap={1} />
							</SmallBtn>
							<SmallBtn $gap={4} style={{ height: 17 }}>
								<Ic w={12} h={12}>
									<path d="M1 8l7-7 3 3-7 7H2z" fill="#ec7f8c" />
								</Ic>
								Clear<Caret $gap={1} />
							</SmallBtn>
						</SmallStack>
						<BigBtn $w={30}>
							<BigIcon>
								<svg width="26" height="26" viewBox="0 0 26 26">
									<text x="1" y="11" fontSize="10" fill="#2f7bbf" fontFamily={UI}>A</text>
									<text x="1" y="24" fontSize="10" fill="#8a4fb5" fontFamily={UI}>Z</text>
									<path d="M12 8h12l-4.5 6v7h-3v-7z" fill="#8f8f8f" />
								</svg>
							</BigIcon>
							Sort &amp;
							<div>Filter<Caret $gap={3} /></div>
						</BigBtn>
						<BigBtn $w={34}>
							<BigIcon>
								<Ic w={26} h={26}>
									<circle cx="15" cy="10" r="7.5" stroke="#3d7fbd" strokeWidth="1.8" fill="#fff" />
									<path d="M9.5 15.5L3 22.5" stroke="#3d7fbd" strokeWidth="2.6" />
								</Ic>
							</BigIcon>
							Find &amp;
							<div>Select<Caret $gap={3} /></div>
						</BigBtn>
					</GroupBody>
					<GroupLabel>Editing</GroupLabel>
				</Group>
				<Collapse />
			</Ribbon>

			<FormulaArea>
				<NameBox>M69<Caret /></NameBox>
				<Grip><i /><i /><i /></Grip>
				<FxBox>
					<Ic w={11} h={11}><path d="M1.5 1.5l8 8M9.5 1.5l-8 8" stroke="#b9b9b9" strokeWidth="1.2" /></Ic>
					<Ic w={11} h={11}><path d="M1 6l3 3 6-7" stroke="#b9b9b9" strokeWidth="1.4" /></Ic>
					<FxText>fx</FxText>
				</FxBox>
				<FormulaInput>
					<Ic w={10} h={6}><path d="M2 1l3 3 3-3" stroke="#777" strokeWidth="1.5" /></Ic>
				</FormulaInput>
			</FormulaArea>

			<SheetArea>
				<GridPane>
					<HeadRow>
						<Corner />
						{COL_NAMES.map(c => <ColHead key={c} $on={c === 'M'}>{c}</ColHead>)}
					</HeadRow>
					<SheetBody>
						{rows.map(n => (
							<SheetRow key={n}>
								<RowHead $on={n === 69} $dark={n === 71}>{n}</RowHead>
								{(content[n] || []).map(renderCell)}
								{n === 69 && <PinkRule />}
								{n === 69 && <ActiveCell />}
							</SheetRow>
						))}
					</SheetBody>
				</GridPane>
				<VScroll>
					<ScrollBtn><Tri $dir="up" /></ScrollBtn>
					<VThumb />
					<ScrollBtn style={{ marginTop: 1 }}><Tri $dir="down" /></ScrollBtn>
				</VScroll>
			</SheetArea>

			<TabsBar>
				<TabNav><Tri $dir="left" $light /><Tri $dir="right" $light /></TabNav>
				<SheetTab>CASE3</SheetTab>
				<AddSheet>+</AddSheet>
				<HScroll>
					<HBtn><Tri $dir="left" /></HBtn>
					<HThumb />
					<span style={{ flex: 1 }} />
					<HBtn><Tri $dir="right" /></HBtn>
				</HScroll>
			</TabsBar>

			<StatusBar>
				Ready
				<span style={{ flex: 1 }} />
				<ViewBtn $on>
					<Ic w={12} h={11}><path d="M.5.5h11v10H.5zM.5 3.5h11M.5 7h11M4 .5v10M8 .5v10" stroke="#666" /></Ic>
				</ViewBtn>
				<ViewBtn>
					<Ic w={12} h={11}><path d="M.5.5h11v10H.5zM4 3h4v5H4z" stroke="#777" /></Ic>
				</ViewBtn>
				<ViewBtn>
					<Ic w={12} h={11}><path d="M.5.5h11v10H.5zM.5 7h11M6 .5V7" stroke="#555" /></Ic>
				</ViewBtn>
				<ZoomSign style={{ marginLeft: 5 }}>-</ZoomSign>
				<ZoomSlider />
				<ZoomSign>+</ZoomSign>
				<ZoomPct>87%</ZoomPct>
			</StatusBar>

			<Taskbar>
				<StartBtn>
					<Ic w={13} h={13}>
						<path d="M0 1.8L5.5 1v5H0zM6.5.9L13 0v6H6.5zM0 7h5.5v5L0 11.2zM6.5 7H13v6l-6.5-.9z" fill="#fff" />
					</Ic>
				</StartBtn>
				<SearchBox>
					<Ic w={18} h={18}><circle cx="9" cy="9" r="7" stroke="#111" strokeWidth="2" fill="#fff" /></Ic>
					<SearchText>Type here to search</SearchText>
					<MicSlot>
						<Ic w={10} h={14}>
							<rect x="3" y="1" width="4" height="8" rx="2" stroke="#333" />
							<path d="M1 7c0 5 8 5 8 0M5 11v2M3 13.5h4" stroke="#333" />
						</Ic>
					</MicSlot>
				</SearchBox>
				<TaskBtn $w={41}>
					<Ic w={14} h={14}>
						<path d="M3 3h8v8H3zM0 1h2M0 13h2M12 1h2M12 13h2" stroke="#eee" />
					</Ic>
				</TaskBtn>
				<TaskBtn $active $running>
					<svg width="18" height="16" viewBox="0 0 18 16">
						<rect x="8" y="2" width="10" height="12" fill="#fff" />
						<path d="M12 4h5M12 7h5M12 10h5" stroke="#1f7244" />
						<rect y="1" width="11" height="14" fill="#1f7244" />
						<text x="5.5" y="11.5" fontSize="9" fontWeight="700" textAnchor="middle" fill="#fff" fontFamily={CELL}>X</text>
					</svg>
				</TaskBtn>
				<TaskBtn>
					<svg width="18" height="16" viewBox="0 0 18 16">
						<rect x="8" y="2" width="10" height="12" fill="#fff" />
						<rect x="12" y="3" width="5" height="2.5" fill="#80397b" />
						<rect x="12" y="6.5" width="5" height="2.5" fill="#80397b" />
						<rect y="1" width="12" height="14" fill="#80397b" />
						<text x="6" y="11.5" fontSize="9" fontWeight="700" textAnchor="middle" fill="#fff" fontFamily={CELL}>N</text>
					</svg>
				</TaskBtn>
				<TaskBtn>
					<svg width="18" height="16" viewBox="0 0 18 16">
						<rect x="7" y="2" width="11" height="12" fill="#fff" />
						<circle cx="13" cy="6" r="2.5" fill="#d24726" />
						<rect y="1" width="11" height="14" fill="#d24726" />
						<text x="5.5" y="11.5" fontSize="9" fontWeight="700" textAnchor="middle" fill="#fff" fontFamily={CELL}>P</text>
					</svg>
				</TaskBtn>
				<TaskBtn>
					<svg width="18" height="16" viewBox="0 0 18 16">
						<rect x="8" y="2" width="10" height="12" fill="#fff" />
						<path d="M12 4h5M12 7h5M12 10h5" stroke="#2b579a" />
						<rect y="1" width="12" height="14" fill="#2b579a" />
						<text x="6" y="11.5" fontSize="9" fontWeight="700" textAnchor="middle" fill="#fff" fontFamily={CELL}>W</text>
					</svg>
				</TaskBtn>
				<TaskBtn>
					<svg width="20" height="20" viewBox="0 0 20 20">
						<text x="10" y="15" fontSize="18" fontWeight="700" textAnchor="middle" fill="#27a9e6" fontFamily={CELL}>e</text>
						<ellipse cx="10" cy="10" rx="9.5" ry="5" transform="rotate(-35 10 10)" fill="none" stroke="#f2c230" strokeWidth="1" strokeDasharray="14 8" />
					</svg>
				</TaskBtn>
				<TaskBtn>
					<Ic w={13} h={17}><path d="M0 0h9l4 4v13H0z" fill="#f2f2f2" /></Ic>
				</TaskBtn>
				<TaskBtn>
					<Ic w={18} h={20}>
						<ellipse cx="9" cy="10" rx="7" ry="8.5" stroke="#e0182d" strokeWidth="4" />
					</Ic>
				</TaskBtn>
				<TaskBtn>
					<Ic w={20} h={20}>
						<path d="M7 5V3.5a3 3 0 0 1 6 0V5" stroke="#fff" />
						<rect x="1" y="5" width="18" height="14" fill="#fff" />
						<rect x="7" y="8" width="3" height="3" fill="#f25022" />
						<rect x="10.5" y="8" width="3" height="3" fill="#7fba00" />
						<rect x="7" y="11.5" width="3" height="3" fill="#00a4ef" />
						<rect x="10.5" y="11.5" width="3" height="3" fill="#ffb900" />
					</Ic>
				</TaskBtn>
				<TaskBtn $running>
					<Ic w={18} h={18}>
						<circle cx="9" cy="9" r="9" fill="#dd4b3e" />
						<path d="M9 9L5 17A9 9 0 0 1 1.2 4.5z" fill="#3aa757" />
						<path d="M9 9L5 17A9 9 0 0 0 16.8 13.500z" fill="#3aa757" />
						<path d="M9 9l7.8 4.500A9 9 0 0 0 18 9a9 9 0 0 0-1.2-4.500H9z" fill="#f4c20d" />
						<circle cx="9" cy="9" r="4" fill="#fff" />
						<circle cx="9" cy="9" r="3" fill="#3f7fe0" />
					</Ic>
				</TaskBtn>
				<Tray>
					<TrayItem $w={34}>
						<Ic w={14} h={14}>
							<circle cx="5" cy="7" r="2.3" stroke="#fff" />
							<path d="M1 13c0-2 2-3.500 4-3.500S9 11 9 13" stroke="#fff" />
							<circle cx="10" cy="3" r="1.8" stroke="#ddd" />
							<path d="M9 6.5c2 0 4 1 4 3" stroke="#ddd" />
						</Ic>
					</TrayItem>
					<TrayItem $w={30}><Ic w={10} h={6}><path d="M.5 5.5L5 1l4.500 4.500" stroke="#eee" /></Ic></TrayItem>
					<TrayItem $w={20}>
						<Ic w={14} h={8}><path d="M.5.5h12v7H.5z" stroke="#eee" /><rect x="1" y="1" width="5" height="6" fill="#eee" /><rect x="13" y="3" width="1" height="2" fill="#eee" /></Ic>
					</TrayItem>
					<TrayItem $w={30}>
						<Ic w={14} h={9}><path d="M2 9a2 2 0 0 1 0-4c1-4 6-4 7-1 3-1 5 2 4 5z" fill="#eee" /></Ic>
					</TrayItem>
					<TrayItem $w={22}>
						<Ic w={12} h={12}>
							<path d="M1 11c0-5 4-9 10-10M4 11c0-3 2-6 7-7M7 11c0-2 2-4 4-4" stroke="#aaa" />
							<circle cx="10.5" cy="10.5" r="1" fill="#eee" />
						</Ic>
					</TrayItem>
					<TrayItem $w={28}>
						<Ic w={13} h={12}>
							<path d="M1 4h2l3-3v10L3 8H1z" stroke="#eee" />
							<path d="M8 4c1 1 1 3 0 4M10 2.5c2 2 2 5 0 7" stroke="#bbb" />
						</Ic>
					</TrayItem>
					<TrayItem $w={30}>
						<Ic w={12} h={13}><path d="M1 12l4-5 3-3 2-3 1 1-2 3-3 3-4 5zM6 9l3-1" stroke="#ddd" /></Ic>
					</TrayItem>
					<Clock><span>7:33 PM</span><span>6/28/2018</span></Clock>
					<Notify>
						<Ic w={14} h={13}><path d="M0 0h14v9H6l-3 3V9H0z" fill="#f2f2f2" /><path d="M3 3h8M3 6h8" stroke="#777" /></Ic>
						<NotifyCount>3</NotifyCount>
					</Notify>
				</Tray>
			</Taskbar>
		</Page>
	);
};

export default App;
